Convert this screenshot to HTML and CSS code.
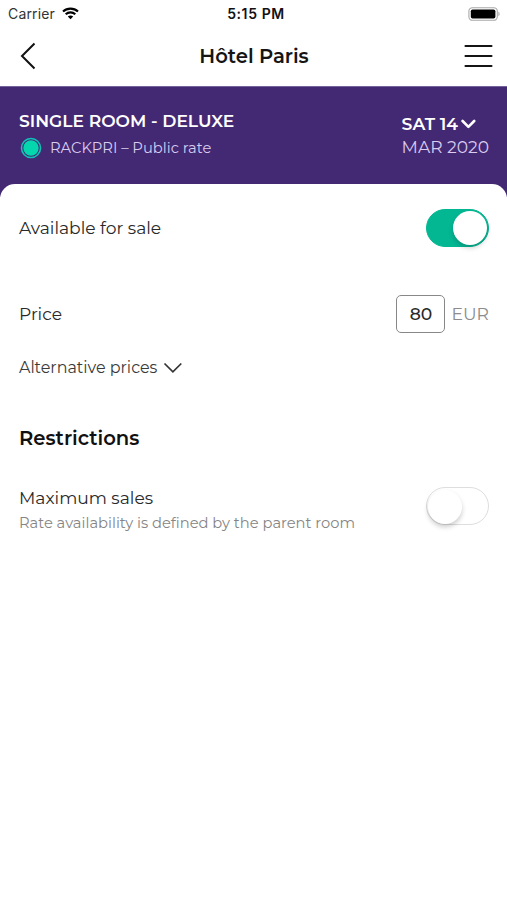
FILE: index.html
```html
<!DOCTYPE html>
<html lang="en">
<head>
<meta charset="utf-8">
<title>Hôtel Paris</title>
<link rel="stylesheet" href="styles.css">
</head>
<body>
<div class="status">
  <div class="carrier"><span class="carrier-name">Carrier</span>
    <svg class="wifi" width="17" height="13" viewBox="0 0 17 13" fill="none" stroke="#000" stroke-width="2.1"><path d="M1 4.6C5.2.6 11.8.6 16 4.6M3.7 7.3c2.7-2.6 6.9-2.6 9.6 0"/><path d="M8.5 12.3 5.8 9.5c1.5-1.4 3.9-1.4 5.4 0z" fill="#000" stroke="none"/></svg>
  </div>
  <span class="clock">5:15 PM</span>
  <svg class="battery" width="32" height="14" viewBox="0 0 32 14"><rect x=".9" y=".7" width="28.4" height="12.6" rx="3.6" fill="#fff" stroke="#a9a9a9" stroke-width="1.1"/><rect x="2.8" y="2.5" width="24.6" height="9" rx="1.8"/><path d="M30.4 4.8c1.6.6 1.6 3.8 0 4.4z" fill="#a9a9a9"/></svg>
</div>
<header class="nav">
  <svg class="back" width="16" height="28" viewBox="0 0 16 28" fill="none" stroke="#111" stroke-width="2"><path d="M14.5 1.5 2 14l12.5 12.5"/></svg>
  <h1 class="title">Hôtel Paris</h1>
  <svg class="menu" width="29" height="24" viewBox="0 0 29 24" stroke="#151515" stroke-width="2.1" stroke-linecap="round"><path d="M1.5 2h26M1.5 12h26M1.5 22h26"/></svg>
</header>
<section class="banner">
  <div class="room">
    <div class="room-name">SINGLE ROOM - DELUXE</div>
    <div class="rate">
      <svg width="22" height="22" viewBox="0 0 22 22"><circle cx="11" cy="11" r="9.5" fill="#432874" stroke="#10c3b5" stroke-width="1.6"/><circle cx="11" cy="11" r="7.7" fill="#04d6ae"/></svg>
      <span class="rate-name">RACKPRI – Public rate</span>
    </div>
  </div>
  <div class="date">
    <div class="day"><span>SAT 14</span><svg width="15" height="10" viewBox="0 0 15 10" fill="none" stroke="#fff" stroke-width="2.6" stroke-linecap="round" stroke-linejoin="round"><path d="m1.6 2 5.8 5.8L13.2 2"/></svg></div>
    <div class="month">MAR 2020</div>
  </div>
</section>
<main class="sheet">
  <div class="row available"><span class="label">Available for sale</span><span class="toggle on"><span class="knob"></span></span></div>
  <div class="row price"><span class="label">Price</span><div class="amount"><span class="box">80</span><span class="currency">EUR</span></div></div>
  <div class="row alternative"><span class="alt-label">Alternative prices</span><svg width="20" height="12" viewBox="0 0 20 12" fill="none" stroke="#333" stroke-width="1.7"><path d="m1.5 1.5 8.4 8.4 8.4-8.4"/></svg></div>
  <h2 class="heading">Restrictions</h2>
  <div class="row maximum"><div><div class="label">Maximum sales</div><div class="hint">Rate availability is defined by the parent room</div></div><span class="toggle"><span class="knob"></span></span></div>
</main>
</body>
</html>
```

FILE: styles.css
```css
* { box-sizing: border-box; }
body { margin: 0; background: #fff; font-family: Montserrat, Inter, sans-serif; color: #292929; white-space: nowrap; }
svg { display: block; flex: none; }
h1, h2 { margin: 0; }
.status { height: 27px; padding: 0 7px 0 8px; display: grid; grid-template-columns: 1fr auto 1fr; align-items: center; color: #111; font-family: Inter, sans-serif; }
.carrier { display: flex; align-items: center; gap: 7px; }
.carrier-name { font-size: 14px; letter-spacing: .15px; color: #333; }
.clock { margin-left: 4px; font-size: 14px; font-weight: 600; letter-spacing: .6px; }
.battery { justify-self: end; }
.nav { height: 59px; padding: 0 14px 2px 20px; display: grid; grid-template-columns: 1fr auto 1fr; align-items: center; }
.title { margin-right: 5px; font-size: 19.6px; font-weight: 600; line-height: 24px; color: #151515; }
.menu { justify-self: end; }
.banner { height: 111px; margin-bottom: -13px; padding: 23px 18px 0 19px; display: flex; justify-content: space-between; background: #432874; border-top: 1px solid #75629a; color: #fff; }
.room-name { font-size: 17.1px; line-height: 22px; font-weight: 600; }
.rate { display: flex; align-items: center; gap: 8px; margin: 5px 0 0 1px; color: #d9ccef; }
.rate-name { font-size: 14.7px; line-height: 20px; }
.day { display: flex; align-items: center; gap: 3px; margin-top: 3px; font-size: 17.2px; line-height: 22px; font-weight: 600; }
.month { font-size: 17.1px; line-height: 24px; color: #d9ccef; }
.sheet { position: relative; height: 716px; padding: 25px 18px 0 19px; background: #fff; border-radius: 15px 15px 0 0; }
.row { display: flex; align-items: center; justify-content: space-between; }
.label { font-size: 17.1px; line-height: 22px; }
.available .label { margin-top: -1px; }
.toggle { width: 63px; height: 38px; padding: 2px; border-radius: 19px; display: flex; border: 1.5px solid #dedede; background: #fff; }
.knob { width: 34px; height: 34px; border-radius: 50%; background: #fff; box-shadow: 0 3px 5px rgba(0,0,0,.2); margin: -.5px 0 0 -1px; }
.on { background: #04b793; border-color: #04b793; justify-content: flex-end; }
.on .knob { margin: -1px -1px 0 0; box-shadow: 0 3px 5px rgba(0,0,0,.18); }
.price { margin-top: 48px; height: 38px; }
.amount { display: flex; align-items: center; gap: 6px; }
.box { width: 49px; height: 38px; border: 1.5px solid #888; border-radius: 5px; font-size: 17.2px; line-height: 36px; text-align: center; font-weight: 500; }
.currency { margin-top: -1px; font-size: 17.2px; line-height: 22px; color: #8c8c8c; }
.alternative { margin-top: 24px; height: 22px; justify-content: flex-start; gap: 6px; }
.alt-label { font-size: 15.95px; line-height: 22px; color: #3a3a3a; }
.heading { margin-top: 46px; font-size: 19.6px; line-height: 26px; font-weight: 600; color: #111; }
.maximum { margin-top: 36px; height: 52px; align-items: flex-start; }
.hint { margin-top: 4px; font-size: 14.7px; line-height: 20px; font-variant-ligatures: none; color: #858585; }
```
